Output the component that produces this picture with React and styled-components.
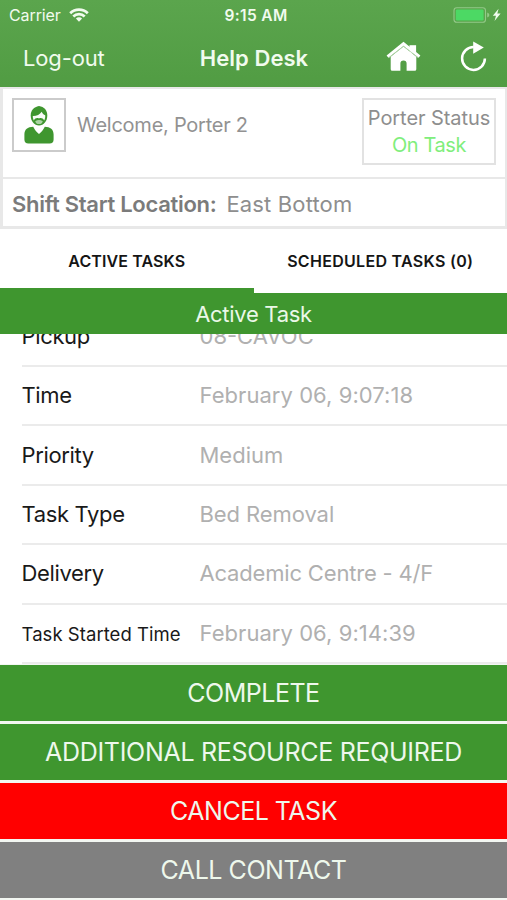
// Import modules ==============================================================
import * as React from 'react';
import styled, {createGlobalStyle} from 'styled-components';

const GREEN = '#3f962f';

const GlobalStyle = createGlobalStyle`
  * {
    box-sizing: border-box;
  }

  body {
    margin: 0;
    background: #ffffff;
    font-family: Inter, 'Liberation Sans', sans-serif;
  }
`;

// Layout ======================================================================
const Screen = styled.div`
  display: flex;
  flex-direction: column;
  width: 507px;
  height: 900px;
  overflow: hidden;
  background: #ffffff;
`;

const Header = styled.header`
  flex: none;
  height: 87px;
  color: #f1fbee;
  background: linear-gradient(#5ba54d, #519c43);
`;

const StatusBar = styled.div`
  display: grid;
  grid-template-columns: 1fr auto 1fr;
  align-items: center;
  height: 29px;
  padding: 0 6px 0 9px;
  font-size: 16px;
`;

const Carrier = styled.div`
  display: flex;
  align-items: center;
  gap: 8px;
  letter-spacing: -0.1px;
`;

const Clock = styled.div`
  padding: 1px 0 0 2px;
  font-size: 15.5px;
  font-weight: 600;
  letter-spacing: 0.35px;
`;

const Power = styled.div`
  display: flex;
  justify-content: flex-end;
`;

const NavBar = styled.nav`
  display: grid;
  grid-template-columns: 1fr auto 1fr;
  align-items: center;
  height: 58px;
  padding: 0 20px 0 23px;
`;

const LogOut = styled.div`
  font-size: 22px;
  letter-spacing: -0.15px;
`;

const Title = styled.div`
  padding-right: 2px;
  font-size: 22px;
  font-weight: 600;
  letter-spacing: 0.05px;
`;

const NavIcons = styled.div`
  display: flex;
  justify-content: flex-end;
  align-items: center;
  gap: 39px;
  padding-bottom: 3px;
`;

// Porter panel ================================================================
const Panel = styled.section`
  flex: none;
  height: 142px;
  border: solid #e8e8e8;
  border-width: 2px 2px 3px 3px;
`;

const Profile = styled.div`
  display: flex;
  align-items: flex-start;
  height: 90px;
  padding: 9px 9px 0 9px;
  border-bottom: 2px solid #e8e8e8;
`;

const Avatar = styled.div`
  display: flex;
  justify-content: center;
  width: 54px;
  height: 54px;
  padding-top: 5px;
  border: 2px solid #cbcbcb;
`;

const Welcome = styled.div`
  flex: 1;
  padding: 0 0 0 11px;
  font-size: 20px;
  line-height: 54px;
  letter-spacing: -0.25px;
  color: #929292;
`;

const PorterStatus = styled.div`
  width: 134px;
  height: 67px;
  padding-top: 5px;
  border: 2px solid #e2e2e2;
  font-size: 20px;
  line-height: 27px;
  letter-spacing: -0.08px;
  text-align: center;
  white-space: nowrap;
  color: #8e8e8e;
`;

const StatusValue = styled.div`
  letter-spacing: -0.4px;
  color: #80ee7c;
`;

const Shift = styled.div`
  display: flex;
  align-items: center;
  height: 47px;
  padding: 3px 0 0 9px;
  font-size: 22px;
  letter-spacing: 0.15px;
  color: #8e8e8e;
`;

const ShiftLabel = styled.span`
  margin-right: 10px;
  font-weight: 600;
  letter-spacing: -0.3px;
  color: #7b7b7b;
`;

// Tabs ========================================================================
const Tabs = styled.div`
  display: flex;
  flex: none;
  height: 64px;
`;

const Tab = styled.div`
  flex: 1;
  border-bottom: 5px solid ${props => (props.$active ? GREEN : 'transparent')};
  font-size: 16px;
  font-weight: 600;
  line-height: 65px;
  letter-spacing: ${props => (props.$active ? '0.1px' : '0.3px')};
  text-align: center;
  color: #151515;
`;

const Banner = styled.div`
  flex: none;
  height: 41px;
  font-size: 22px;
  line-height: 42px;
  letter-spacing: -0.3px;
  text-align: center;
  color: #ebf8e8;
  background: ${GREEN};
`;

// Task details ================================================================
const Details = styled.div`
  display: flex;
  flex: none;
  flex-direction: column;
  justify-content: flex-end;
  height: 330px;
  overflow: hidden;
`;

const Row = styled.div`
  display: flex;
  flex: none;
  align-items: center;
  height: 59.4px;
  margin-left: 21.5px;
  padding-bottom: 1px;
  border-bottom: 2px solid #ebebeb;
`;

const RowLabel = styled.div`
  width: 178px;
  padding-top: ${props => (props.$small ? '3px' : '0')};
  font-size: ${props => (props.$small ? '18.5px' : '22px')};
  letter-spacing: ${props => (props.$small ? '0.05px' : '-0.35px')};
  white-space: nowrap;
  color: #191919;
`;

const RowValue = styled.div`
  font-size: 22px;
  letter-spacing: ${props => props.$tracking || 0}px;
  white-space: nowrap;
  color: #b0b0b0;
`;

// Actions =====================================================================
const Actions = styled.div`
  display: flex;
  flex: none;
  flex-direction: column;
  gap: 3.3px;
  padding-top: 0.5px;
  background: #f3f7f2;
`;

const Action = styled.div`
  height: 56px;
  font-size: 25px;
  line-height: 56px;
  letter-spacing: ${props => props.$tracking}px;
  text-align: center;
  color: #eef8ec;
  background: ${props => props.$color};
`;

const Footer = styled.div`
  height: 4px;
  background: #ececec;
`;

// Icons =======================================================================
const WifiIcon = () => (
  <svg width="20" height="14" viewBox="0 0 20 14" fill="none">
    <g stroke="#f1fbee" strokeWidth="2.7">
      <path d="M1.2 5.3a12.4 12.4 0 0 1 17.6 0" />
      <path d="M4.3 8.5a8 8 0 0 1 11.4 0" />
    </g>
    <path d="M6.9 10.6a4.4 4.4 0 0 1 6.2 0L10 13.8z" fill="#f1fbee" />
  </svg>
);

const BatteryIcon = () => (
  <svg width="48" height="16" viewBox="0 0 48 16">
    <rect x="1" y="0.7" width="31.5" height="14.6" rx="2.8" fill="none" stroke="#93c989" strokeWidth="1.1" />
    <rect x="2.8" y="2.5" width="27.8" height="11" rx="1.3" fill="#4cd964" />
    <path d="M34.2 5.6q2.2.6 2.2 2.4t-2.2 2.4z" fill="#93c989" />
    <path d="M45.6 1.8l-5.8 6.9h3.2l-1.5 5.4 6.1-7.5h-3.3z" fill="#f1fbee" />
  </svg>
);

const HomeIcon = () => (
  <svg width="35" height="31" viewBox="0 0 35 31" fill="#ffffff">
    <path d="M23.5 4.2h6.6v8h-6.6z" />
    <path d="M17.5.8L.6 14.4l1.8 2.4L17.5 4.9l15.1 11.9 1.8-2.4z" />
    <path d="M17.5 5.4l12.8 10.4v12.4q0 1.6-1.6 1.6h-8.1v-7.2q0-3.1-3.1-3.1t-3.1 3.1v7.2H6.3q-1.6 0-1.6-1.6V15.8z" />
    <path d="M2.9 16.6L17.5 5.2l14.6 11.4" fill="none" stroke="#b4d6ad" strokeWidth="0.9" />
  </svg>
);

const RefreshIcon = () => (
  <svg width="27" height="31" viewBox="0 0 27 31">
    <path d="M13.8 6.1A11.4 11.4 0 1 0 24.9 17.5" fill="none" stroke="#ffffff" strokeWidth="2.5" />
    <path d="M13.2.6l10.6 5.9-10.6 6.2z" fill="#ffffff" />
  </svg>
);

const PorterIcon = () => (
  <svg width="32" height="40" viewBox="0 0 32 40" fill={GREEN}>
    <path d="M16 .9c-5.2 1-8.3 4.2-8.3 9.5 0 5.5 3.5 10 8.3 10s8.3-4.5 8.3-10C24.3 5.1 21.2 1.7 16 .9z" />
    <path d="M9.8 11c3.9.1 7-1.4 8.9-4.3.8 1.7 1.9 2.9 3.5 3.6.2 2-.2 3.5-1 5.1-1.5-2.3-3.1-2.8-5.2-1.9-2.1-.9-3.7-.4-5.2 1.9-.7-1.4-1-2.7-1-4.4z" fill="#f8fcf7" />
    <path d="M12.2 16.2q3.8-2.5 7.6 0-.8 2.9-3.8 2.9t-3.8-2.9z" fill="#a9d3a2" />
    <path d="M10.2 21.8c1.7 3.2 3.4 5.5 5.8 7.2 2.4-1.7 4.1-4 5.8-7.2 5.5.2 8.8 2.6 8.8 7.7v5q0 4-4 4H5.4q-4 0-4-4v-5c0-5.1 3.3-7.5 8.8-7.7z" />
  </svg>
);

// Data ========================================================================
const ROWS = [
  {label: 'Pickup', value: '08-CAVOC'},
  {label: 'Time', value: 'February 06, 9:07:18', tracking: 0.05},
  {label: 'Priority', value: 'Medium'},
  {label: 'Task Type', value: 'Bed Removal', tracking: -0.08},
  {label: 'Delivery', value: 'Academic Centre - 4/F', tracking: -0.18},
  {
    label: 'Task Started Time',
    value: 'February 06, 9:14:39',
    tracking: 0.05,
    small: true,
  },
];

const ACTIONS = [
  {label: 'COMPLETE', color: GREEN, tracking: -0.5},
  {label: 'ADDITIONAL RESOURCE REQUIRED', color: GREEN, tracking: -0.29},
  {label: 'CANCEL TASK', color: '#ff0000', tracking: -0.5},
  {label: 'CALL CONTACT', color: '#808080', tracking: -0.45},
];

class App extends React.PureComponent {
  render() {
    return (
      <React.Fragment>
        <GlobalStyle />
        <Screen>
          <Header>
            <StatusBar>
              <Carrier>
                Carrier
                <WifiIcon />
              </Carrier>
              <Clock>9:15 AM</Clock>
              <Power>
                <BatteryIcon />
              </Power>
            </StatusBar>
            <NavBar>
              <LogOut>Log-out</LogOut>
              <Title>Help Desk</Title>
              <NavIcons>
                <HomeIcon />
                <RefreshIcon />
              </NavIcons>
            </NavBar>
          </Header>
          <Panel>
            <Profile>
              <Avatar>
                <PorterIcon />
              </Avatar>
              <Welcome>Welcome, Porter 2</Welcome>
              <PorterStatus>
                Porter Status
                <StatusValue>On Task</StatusValue>
              </PorterStatus>
            </Profile>
            <Shift>
              <ShiftLabel>Shift Start Location:</ShiftLabel>
              <span>East Bottom</span>
            </Shift>
          </Panel>
          <Tabs>
            <Tab $active>ACTIVE TASKS</Tab>
            <Tab>SCHEDULED TASKS (0)</Tab>
          </Tabs>
          <Banner>Active Task</Banner>
          <Details>
            {ROWS.map(row => (
              <Row key={row.label}>
                <RowLabel $small={row.small}>{row.label}</RowLabel>
                <RowValue $tracking={row.tracking}>{row.value}</RowValue>
              </Row>
            ))}
          </Details>
          <Actions>
            {ACTIONS.map(action => (
              <Action
                key={action.label}
                $color={action.color}
                $tracking={action.tracking}
              >
                {action.label}
              </Action>
            ))}
            <Footer />
          </Actions>
        </Screen>
      </React.Fragment>
    );
  }
}

export default App;
